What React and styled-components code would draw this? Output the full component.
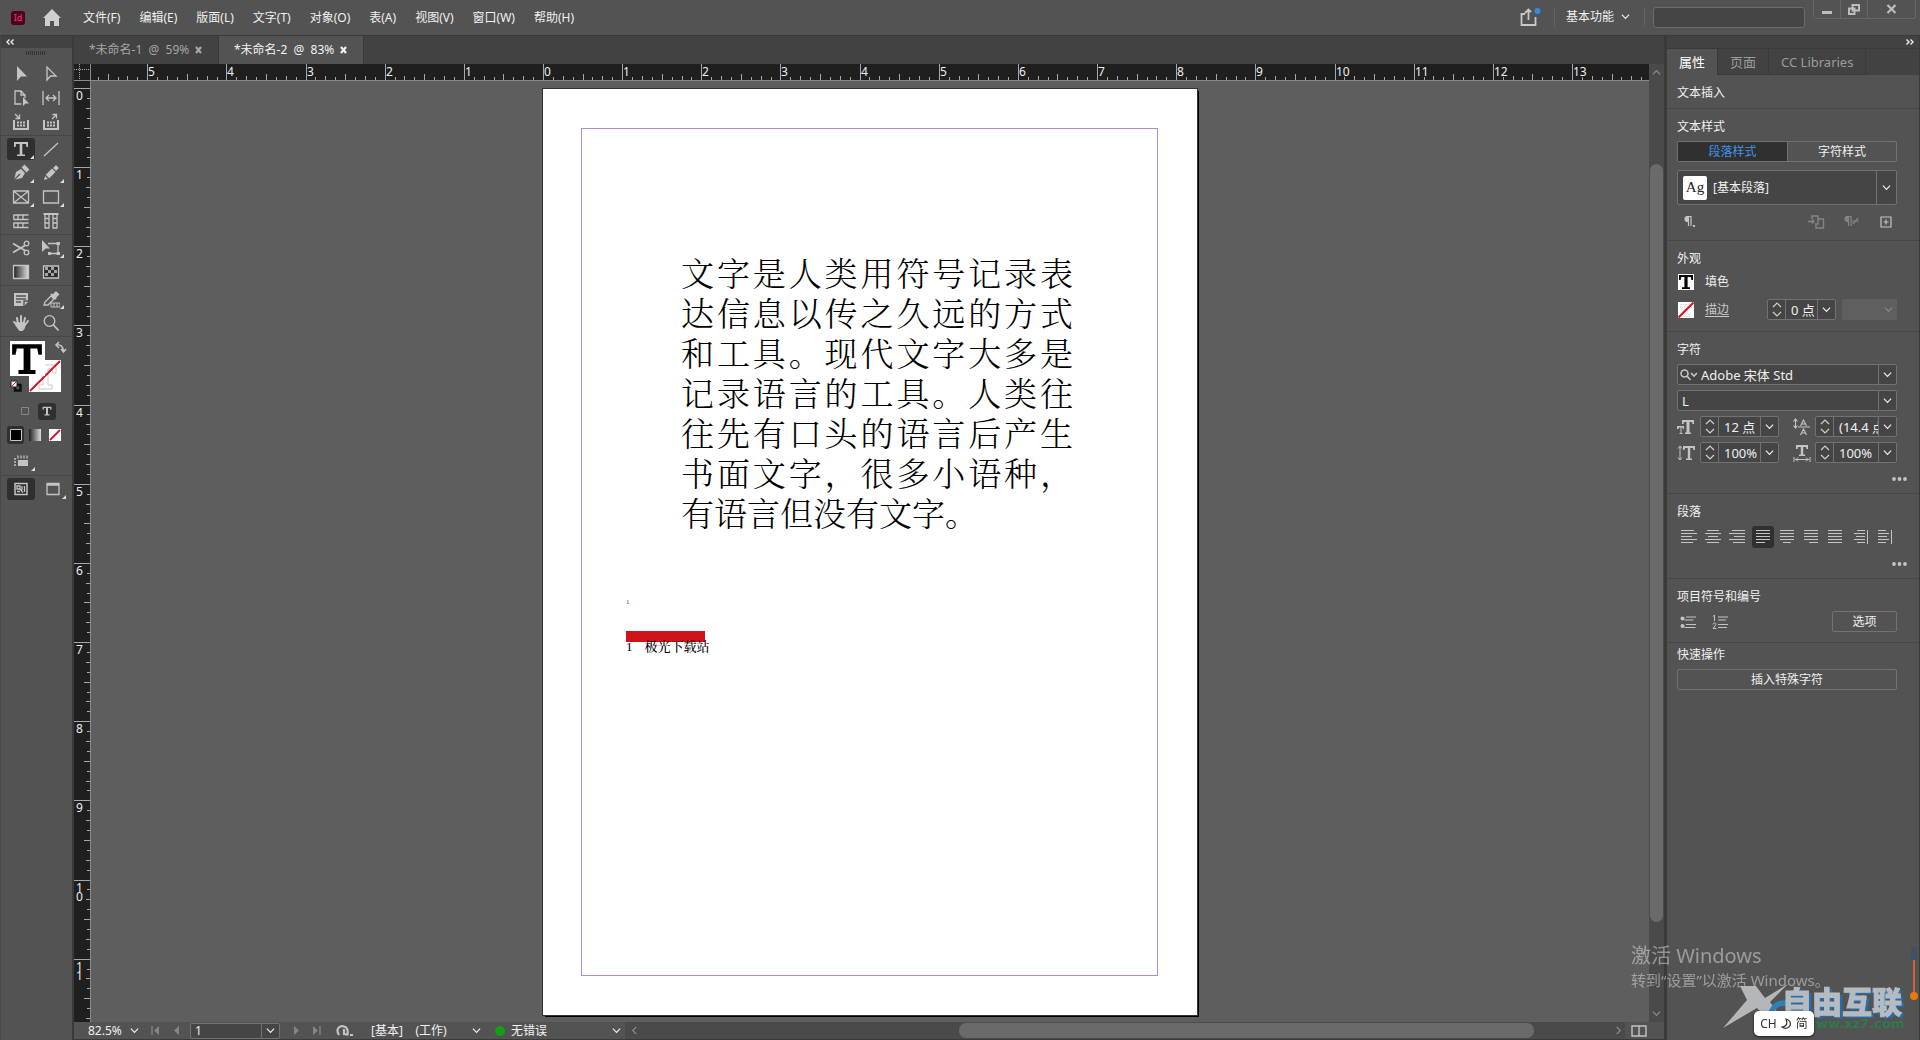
import React from "react";
import styled, { createGlobalStyle, css } from "styled-components";

const ui = `"Noto Sans", "Noto Sans CJK SC", sans-serif`;
const slab = `"DejaVu Serif", "Liberation Serif", serif`;

const c = {
  panel: "#535353",
  dark: "#424242",
  edge: "#3a3a3a",
  line: "#474747",
  canvas: "#5e5e5e",
  ruler: "#1f1f1f",
  field: "#454545",
  border: "#727272",
  text: "#f0f0f0",
  icon: "#c4c4c4",
};

const Global = createGlobalStyle`
  * { box-sizing: border-box; }
  body { margin: 0; background: ${c.panel}; overflow: hidden; }
  button, input, select { font: inherit; color: inherit; margin: 0; padding: 0; border: 0; background: none; border-radius: 0; outline: 0; }
  svg { display: block; flex: none; }
`;

const Shell = styled.div`
  height: 100vh;
  display: flex;
  flex-direction: column;
  font: 12px/16px ${ui};
  color: ${c.text};
  background: ${c.panel};
`;

/* ---------- title bar ---------- */

const TitleBar = styled.header`
  height: 35px;
  flex: none;
  display: flex;
  align-items: center;
  padding: 0 4px 0 11px;
`;

const Logo = styled.span`
  width: 14px;
  height: 14px;
  border-radius: 3px;
  background: #49021f;
  color: #ff3366;
  font-size: 9px;
  line-height: 14px;
  text-align: center;
`;

const HomeButton = styled.button`
  display: flex;
  margin-left: 18px;
`;

const IconButton = styled.button`
  display: flex;
  align-items: center;
  justify-content: center;
  width: ${(p) => p.$w || 22}px;
  height: ${(p) => p.$h || 22}px;
  color: ${(p) => (p.$dim ? "#858585" : c.icon)};
  border-radius: 3px;
  background: ${(p) => (p.$on ? "#303030" : "transparent")};
`;

const Menu = styled.nav`
  display: flex;
  gap: 19px;
  margin-left: 22px;
`;

const MenuItem = styled.button`
  white-space: nowrap;
`;

const TitleTools = styled.div`
  margin-left: auto;
  display: flex;
  align-items: center;
  align-self: stretch;
  padding-bottom: 2px;
`;

const Rule = styled.span`
  width: 1px;
  height: 20px;
  margin: 0 ${(p) => p.$r}px 0 ${(p) => p.$l}px;
  background: #636363;
`;

const Workspace = styled.button`
  display: flex;
  align-items: center;
  gap: 7px;
`;

const Search = styled.input`
  width: 152px;
  height: 21px;
  margin-top: 2px;
  background: ${c.field};
  border: 1px solid #6c6c6c;
  border-radius: 3px;
`;

const WindowButtons = styled.div`
  display: flex;
  align-self: flex-start;
  margin-left: 8px;
  height: 19px;
  border: 1px solid #666;
  border-top: 0;
  border-radius: 0 0 3px 3px;

  button {
    display: flex;
    align-items: center;
    justify-content: center;
    width: 27px;
    color: #bdbdbd;
    border-right: 1px solid #666;
  }
  button:last-child {
    width: 47px;
    border-right: 0;
  }
`;

const Body = styled.div`
  flex: 1;
  min-height: 0;
  display: flex;
`;

/* ---------- tools ---------- */

const Toolbox = styled.aside`
  width: 74px;
  flex: none;
  border-right: 2px solid ${c.edge};
  border-left: 1px solid #484848;
`;

const Collapse = styled.button`
  display: flex;
  align-items: center;
  justify-content: ${(p) => (p.$right ? "flex-end" : "flex-start")};
  width: 100%;
  height: 13px;
  padding: 0 5px;
  background: ${c.dark};
  border-top: 1px solid ${c.edge};
`;

const Grip = styled.div`
  width: 20px;
  height: 4px;
  margin: 3px auto 6px 25px;
  background: repeating-linear-gradient(90deg, #333 0 1px, transparent 1px 2px);
`;

const ToolGroup = styled.div`
  display: grid;
  grid-template-columns: 30px 30px;
  grid-auto-rows: 24px;
  padding: 1px 0 1px 5px;
  border-bottom: 1px solid ${c.line};
`;

const Tool = styled.button`
  position: relative;
  display: flex;
  align-items: center;
  justify-content: center;
  width: 28px;
  height: 22px;
  margin: 1px;
  border-radius: 3px;
  color: ${c.icon};
  background: ${(p) => (p.$on ? "#2f2f2f" : "transparent")};

  ${(p) =>
    p.$more &&
    css`
      &::after {
        content: "";
        position: absolute;
        right: 1px;
        bottom: 1px;
        border: 2px solid #ddd;
        border-top-color: transparent;
        border-left-color: transparent;
      }
    `}
`;

const Swatches = styled.div`
  position: relative;
  height: 62px;
`;

const Fill = styled.button`
  position: absolute;
  left: 9px;
  top: 4px;
  width: 35px;
  height: 35px;
  background: #fff;
  z-index: 1;
`;

const Stroke = styled.button`
  position: absolute;
  left: 28px;
  top: 23px;
  width: 32px;
  height: 32px;
  background: #fff;
`;

const Corner = styled.button`
  position: absolute;
  left: ${(p) => p.$x}px;
  top: ${(p) => p.$y}px;
  color: ${c.icon};
`;

const ModeRow = styled.div`
  display: flex;
  align-items: center;
  gap: 2px;
  height: ${(p) => p.$h || 24}px;
  padding-left: ${(p) => p.$x}px;
  ${(p) => p.$line && `border-bottom: 1px solid ${c.line};`}
`;

/* ---------- document ---------- */

const Doc = styled.main`
  flex: 1;
  min-width: 0;
  display: flex;
  flex-direction: column;
`;

const Tabs = styled.div`
  display: flex;
  flex: none;
  height: 29px;
  background: ${c.dark};
  border-top: 1px solid ${c.edge};
`;

const Tab = styled.div`
  display: flex;
  align-items: center;
  gap: 6px;
  padding: 0 14px 0 15px;
  width: 145px;
  white-space: pre;
  color: ${(p) => (p.$on ? "#f4f4f4" : "#a6a6a6")};
  background: ${(p) => (p.$on ? c.panel : "transparent")};
  border-right: 1px solid ${c.edge};
`;

const View = styled.div`
  flex: 1;
  min-height: 0;
  display: grid;
  grid-template-columns: 17px minmax(0, 1fr) 15px;
  grid-template-rows: 17px minmax(0, 1fr);
`;

const RulerCorner = styled.div`
  background: ${c.ruler};
  border: solid #8a8a8a;
  border-width: 0 1px 1px 0;
`;

const RulerBar = styled.div`
  overflow: hidden;
  background: ${c.ruler};
  border: solid #8a8a8a;
  border-width: ${(p) => (p.$v ? "0 1px 0 0" : "0 0 1px 0")};
`;

const VScroll = styled.div`
  grid-column: 3;
  grid-row: 1 / 3;
  display: flex;
  flex-direction: column;
  align-items: center;
  padding: 4px 0;
  background: #4a4a4a;
  color: #8c8c8c;
`;

const Space = styled.div`
  flex: ${(p) => p.$n};
`;

const Thumb = styled.div`
  flex: ${(p) => p.$n};
  align-self: stretch;
  margin: ${(p) => (p.$v ? "0 1px" : "1px 0")};
  border-radius: 7px;
  background: #6a6a6a;
`;

const Canvas = styled.div`
  position: relative;
  overflow: hidden;
  background: ${c.canvas};
`;

const Page = styled.article`
  position: absolute;
  left: 452px;
  top: 8px;
  width: 654px;
  height: 926px;
  padding: 39px 39px 39px 38px;
  background: #fff;
  color: #000;
  box-shadow: 0 0 0 1px #333, 2px 2px 0 0 #000;
`;

const Margins = styled.div`
  height: 848px;
  padding: 123px 84px 0 44px;
  border: 1px solid #b08cc8;
`;

const Story = styled.p`
  width: 392px;
  margin: 0 0 0 55px;
  font: 300 33px/40px "Noto Serif CJK SC", "Noto Sans CJK SC", serif;
  text-align: justify;
`;

const NoteMark = styled.sup`
  display: block;
  margin-top: 66px;
  font: 7px/8px "Liberation Serif", serif;
  color: #7a2430;
`;

const NoteRule = styled.hr`
  width: 79px;
  height: 11px;
  margin: 25px 0 0;
  border: 0;
  background: #d0121b;
`;

const Note = styled.p`
  display: flex;
  gap: 12px;
  margin: -3px 0 0;
  font: 500 13px/16px "Liberation Serif", "Noto Serif CJK SC", "Noto Sans CJK SC", serif;
`;

/* ---------- status bar ---------- */

const Status = styled.footer`
  flex: none;
  display: flex;
  align-items: center;
  height: 18px;
  padding: 0 12px 0 14px;
  border-bottom: 1px solid ${c.edge};
  color: ${c.text};
`;

const Picker = styled.div`
  display: grid;
  align-items: center;
  width: ${(p) => p.$w}px;
  margin-left: ${(p) => p.$l || 0}px;

  select {
    appearance: none;
    grid-area: 1 / 1;
    width: 100%;
  }
  svg {
    grid-area: 1 / 1;
    justify-self: end;
    pointer-events: none;
  }
`;

const Pager = styled.div`
  display: flex;
  align-items: center;
  margin-left: 5px;
`;

const PageBox = styled.div`
  display: flex;
  width: 90px;
  height: 16px;
  margin: 0 6px 0 2px;
  background: ${c.field};
  border: 1px solid ${c.border};
  border-radius: 2px;

  input {
    flex: 1;
    min-width: 0;
    padding-left: 4px;
  }
  button {
    width: 18px;
    display: flex;
    align-items: center;
    justify-content: center;
    border-left: 1px solid ${c.border};
  }
`;

const Lamp = styled.span`
  width: 10px;
  height: 10px;
  margin: 0 6px 0 14px;
  border-radius: 5px;
  background: #12a012;
`;

const HScroll = styled.div`
  flex: 1;
  align-self: stretch;
  display: flex;
  align-items: center;
  margin-left: 4px;
  padding: 0 2px 0 5px;
  background: #4a4a4a;
  color: #8c8c8c;
`;

/* ---------- properties ---------- */

const Dock = styled.aside`
  width: 256px;
  flex: none;
  border-left: 3px solid ${c.edge};
  border-right: 1px solid ${c.edge};
`;

const DockTabs = styled.div`
  display: flex;
  height: 27px;
  background: ${c.dark};
  border-top: 1px solid ${c.edge};
`;

const DockTab = styled.button`
  padding: 0 12px;
  font-size: 13px;
  color: ${(p) => (p.$on ? "#fff" : "#9c9c9c")};
  background: ${(p) => (p.$on ? c.panel : "transparent")};
  border-right: 1px solid ${c.edge};
  border-bottom: 1px solid ${(p) => (p.$on ? c.panel : c.edge)};
`;

const Section = styled.section`
  padding: ${(p) => p.$t || 10}px 22px ${(p) => p.$b || 6}px 10px;
  border-bottom: ${(p) => (p.$last ? 0 : 1)}px solid ${c.line};
`;

const Title = styled.h2`
  margin: 0;
  font: inherit;
`;

const Row = styled.div`
  display: flex;
  align-items: center;
  height: ${(p) => p.$h || 21}px;
  margin-top: ${(p) => p.$t || 5}px;
  gap: ${(p) => p.$g || 0}px;
`;

const Segments = styled.div`
  display: grid;
  grid-template-columns: 1fr 1fr;
  height: 21px;
  margin-top: 6px;
  border: 1px solid ${c.border};
  border-radius: 2px;
`;

const Segment = styled.button`
  color: ${(p) => (p.$on ? "#3f93e8" : c.text)};
  background: ${(p) => (p.$on ? "#303030" : "transparent")};
  border-left: ${(p) => (p.$on ? 0 : 1)}px solid ${c.border};
`;

const Field = styled.div`
  display: flex;
  align-items: stretch;
  width: ${(p) => (p.$w ? p.$w + "px" : "100%")};
  height: ${(p) => p.$h || 21}px;
  margin-top: ${(p) => p.$t || 0}px;
  background: ${c.field};
  border: 1px solid ${c.border};
  border-radius: 2px;
  color: ${c.text};

  input {
    flex: 1;
    width: 0;
    min-width: 0;
    padding-left: ${(p) => p.$pad || 4}px;
    font-size: 13px;
  }
`;

const DropButton = styled.button`
  display: flex;
  align-items: center;
  justify-content: center;
  width: ${(p) => p.$w || 18}px;
  border-left: 1px solid ${c.border};
`;

const Spin = styled.div`
  display: flex;
  flex-direction: column;
  justify-content: space-evenly;
  align-items: center;
  width: 18px;
  border-right: 1px solid ${c.border};
  button {
    display: flex;
  }
`;

const Sample = styled.span`
  align-self: center;
  width: 24px;
  height: 24px;
  margin-left: 5px;
  border-radius: 2px;
  background: #fff;
  color: #222;
  font: 15px/22px "Liberation Serif", serif;
  text-align: center;
`;

const StylePicker = styled.div`
  flex: 1;
  display: flex;
  margin-left: 6px;
  select {
    appearance: none;
    width: 100%;
  }
`;

const StyleTools = styled.div`
  display: flex;
  gap: 13px;
  margin-left: auto;
`;

const FillLabel = styled.label`
  margin-left: 11px;
`;

const SearchMark = styled.span`
  display: flex;
  align-items: center;
  padding-left: 2px;
  color: ${c.icon};
`;

const AlignRow = styled.div`
  display: flex;
  gap: 4px;
  height: 22px;
  margin: 6px 0 0 1px;
`;

const AlignGroup = styled.div`
  display: flex;
  gap: 2px;
`;

const Disabled = styled.button`
  display: flex;
  align-items: center;
  justify-content: flex-end;
  width: 55px;
  height: 21px;
  margin-left: 6px;
  padding-right: 4px;
  color: #8a8a8a;
  background: #5f5f5f;
`;

const CharGrid = styled.div`
  display: grid;
  grid-template-columns: 23px 79px 36px 1fr;
  row-gap: 5px;
  align-items: center;
  margin-top: 5px;
  color: ${c.icon};

  > :nth-child(4n + 3) {
    margin-left: 14px;
  }
`;

const SwatchButton = styled.button`
  width: 16px;
  height: 16px;
  background: #fff;
  margin-left: 1px;
`;

const Link = styled.a`
  color: #c8c8c8;
  margin-left: 11px;
  width: 62px;
  text-underline-offset: 2px;
`;

const Push = styled.button`
  width: ${(p) => (p.$w ? p.$w + "px" : "100%")};
  height: 21px;
  margin-top: ${(p) => p.$t || 0}px;
  margin-left: ${(p) => (p.$w ? "auto" : 0)};
  border: 1px solid ${c.border};
  border-radius: 2px;
`;

const MoreButton = styled.button`
  display: flex;
  align-items: center;
  height: 16px;
  margin: 8px -10px 0 auto;
  color: ${c.icon};
`;

/* ---------- overlays ---------- */

const Activate = styled.div`
  position: fixed;
  right: 94px;
  bottom: 49px;
  width: 195px;
  color: rgba(255, 255, 255, 0.42);
  font-size: 15px;
  line-height: 22px;
  white-space: nowrap;
  pointer-events: none;

  strong {
    display: block;
    font-weight: 400;
    font-size: 20px;
    line-height: 26px;
  }
`;

const Brand = styled.div`
  position: fixed;
  right: 10px;
  bottom: 4px;
  width: 188px;
  height: 54px;
  pointer-events: none;
`;

const Ime = styled.div`
  position: fixed;
  right: 106px;
  bottom: 4px;
  display: flex;
  align-items: center;
  justify-content: center;
  gap: 4px;
  width: 60px;
  height: 25px;
  border-radius: 5px;
  background: #fff;
  color: #333;
  box-shadow: 0 1px 3px rgba(0, 0, 0, 0.6);
`;

const Gauge = styled.div`
  position: fixed;
  right: 2px;
  bottom: 39px;
  pointer-events: none;
`;

/* ---------- drawings ---------- */

const Svg = ({ s = 18, w, h, sw = 1.3, children }) => (
  <svg width={w || s} height={h || s} viewBox={`0 0 ${w || s} ${h || s}`} fill="none" stroke="currentColor" strokeWidth={sw} aria-hidden="true">
    {children}
  </svg>
);

const Chevron = ({ up, left, right }) => (
  <svg width="9" height="9" viewBox="0 0 10 10" fill="none" stroke="currentColor" strokeWidth="1.3" aria-hidden="true">
    <path d={up ? "M1 7l4-4 4 4" : left ? "M7 1L3 5l4 4" : right ? "M3 1l4 4-4 4" : "M1 3l4 4 4-4"} />
  </svg>
);

const Tick = ({ up }) => (
  <svg width="10" height="6" viewBox="0 0 10 6" fill="none" stroke="#d0d0d0" strokeWidth="1.2" aria-hidden="true">
    <path d={up ? "M1 5l4-4 4 4" : "M1 1l4 4 4-4"} />
  </svg>
);

const Cross = () => (
  <svg width="7" height="8" viewBox="0 0 7 8" stroke="currentColor" strokeWidth="2.2" aria-hidden="true">
    <path d="M1 1l5 6M6 1l-5 6" />
  </svg>
);

/* slab-serif T used by the type tool and the text swatches, on a 16 x 16 grid */
const SLAB_T = "M1 1h14v5h-1.600L12.800 3H9.600v10.200H12V15H4v-1.800h2.400V3H3.200L2.600 6H1z";

const TypeMark = ({ s, color = "currentColor" }) => (
  <svg width={s} height={s} viewBox="0 0 16 16" aria-hidden="true">
    <path d={SLAB_T} fill={color} />
  </svg>
);

const NoneT = ({ s }) => (
  <svg width={s} height={s} viewBox="0 0 32 32" aria-hidden="true">
    <path d="M5 5h22v8h-3l-1-4h-4v16h4v4H10v-4h4V9h-5l-1 4H5z" fill="none" stroke="#c9c9c9" />
    <path d="M1 31L31 1" stroke="#d2142b" strokeWidth={s > 20 ? 2 : 4} />
  </svg>
);

const drawings = {
  select: <path d="M5 1v15l4-4.500h6z" fill="currentColor" stroke="none" />,
  direct: <path d="M5 2v13l3.500-4h5.500z" />,
  page: (<><path d="M9.500 15H3V2h6l4 4v3M9 2v4h4" /><path d="M11 8v9l2.500-2.500H17z" fill="currentColor" stroke="none" /></>),
  gap: <path d="M1 2v14M17 2v14M4 9h10M7 6L4 9l3 3M11 6l3 3-3 3" />,
  collect: (<><path d="M2 7v9h14V7" strokeWidth="2" /><path d="M5 9.500h8M5 12.500h8" strokeDasharray="2 1" strokeWidth="2" /><path d="M3 1l4 4M7.500 1.500v4h-4" /></>),
  place: (<><path d="M2 7v9h14V7" strokeWidth="2" /><path d="M5 9.500h8M5 12.500h8" strokeDasharray="2 1" strokeWidth="2" /><path d="M10 6l4-4M10.500 1.500h4v4" /></>),
  type: <path d="M2 2h14v5h-1.500L14 4h-3.700v10.500H13V16H5v-1.500h2.700V4H4L3.500 7H2z" fill="currentColor" stroke="none" />,
  line: <path d="M2 16L16 3" />,
  pen: (<><path d="M2 16l2-8 5-3 4 4-3 5z" fill="currentColor" stroke="none" /><path d="M11 2l5 5" strokeWidth="4" /><path d="M2 16l6-6" stroke="#535353" /></>),
  pencil: (<><path d="M2 16l1.500-5L10 4.500 13.500 8 7 14.500z" fill="currentColor" stroke="none" /><path d="M12.500 2.500l3 3" strokeWidth="4" /><path d="M3 11l4 4" stroke="#535353" /></>),
  frame: <path d="M1.500 3h15v12h-15zM1.500 3l15 12M16.500 3l-15 12" />,
  rect: <path d="M1.500 3h15v12h-15z" />,
  hgrid: (<><path d="M1.500 3h15M1.500 7.500h15M1.500 11h15M1.500 15.500h15" strokeWidth="1.500" /><path d="M1.800 3v4.500M6 3v4.500M11 3v4.500M1.800 11v4.500M6 11v4.500M11 11v4.500" /></>),
  vgrid: (<><path d="M1.500 2h15" strokeWidth="2" /><path d="M3 2v14.500M7 2v14.500M11 2v14.500M15 2v14.500" /><path d="M3 6.500h4M3 11h4M3 16h4M11 6.500h4M11 11h4M11 16h4" /></>),
  scissors: (<><path d="M1 4.500l12 7M1 13.500l12-7" strokeWidth="1.800" /><circle cx="14.500" cy="4.500" r="2.300" /><circle cx="14.500" cy="13.500" r="2.300" /></>),
  transform: (<><path d="M6 4.500h10v10H7" /><path d="M0 1v12l3.500-3.500H8z" fill="currentColor" stroke="none" /><path d="M14.500 3H18v3h-3.500zM14.500 13H18v3h-3.500zM6 13h3v3H6z" fill="currentColor" stroke="none" /></>),
  gradient: (<><defs><linearGradient id="ramp"><stop offset="0" stopColor="#222" /><stop offset="1" stopColor="#ddd" /></linearGradient></defs><path d="M1.500 2.500h15v13h-15z" fill="url(#ramp)" /></>),
  feather: (<><path d="M1.500 3h15v12h-15z" fill="#2c2c2c" /><path d="M3 5.500h12M6 8.500h12M3 11.500h12" strokeDasharray="3 3" strokeWidth="3" stroke="#a5a5a5" /></>),
  note: (<><path d="M2 3h14v9l-4 4H2z" fill="currentColor" stroke="none" /><path d="M4 6h10M4 9h10M4 12h5" stroke="#535353" /><path d="M16 11h-4v5" stroke="#535353" /></>),
  dropper: (<><path d="M2 15l1-3 6-6 3 3-6 6z" /><path d="M10 6l4-4 2.500 2.500-4 4z" fill="currentColor" /><path d="M9 4l5 5" strokeWidth="2" /><path d="M9 13h9v4H9zM12 13v4M15 13v4" strokeWidth="1" /></>),
  hand: (<><path d="M5 10L2 8M6 10L5 4M9 9V2M11.500 10l1.500-6M13 11l3-4" strokeWidth="2" strokeLinecap="round" /><path d="M4.500 8.500l8-.5 1.500 2-1.500 5-2 2h-3L4 12.500 1.500 8z" fill="currentColor" stroke="none" /></>),
  zoom: (<><circle cx="7.500" cy="7" r="5.300" /><path d="M11.500 11l5 5.500" strokeWidth="1.800" /></>),
  normal: (<><path d="M3 3.500h12v11H3z" strokeWidth="1.500" /><path d="M5 6h3v3H5zM10 6v4M12.500 6v6M5 11.500h3M8 9l3 3.500" /></>),
  screen: (<><path d="M3 3.500h12v11H3z" /><path d="M3 4.500h12" strokeWidth="2.500" /></>),
  options: (<><path d="M5 8h10v6H5z" fill="currentColor" stroke="none" /><path d="M5 3.500v3M8 3.500v3M11 3.500v3M14 3.500v3" /><path d="M1 7h2M1 10h2M1 13h2" /></>),
};

const Draw = ({ name }) => <Svg>{drawings[name]}</Svg>;

const STEP = 79.15;
const ticks = (from, to) => {
  const out = [];
  for (let i = from * 8; i <= to * 8; i++) out.push(i);
  return out;
};
const reach = (i) => (i % 8 === 0 ? 16 : i % 4 === 0 ? 6 : i % 2 === 0 ? 4 : 3);

const HRuler = () => (
  <svg width="100%" height="16" aria-hidden="true">
    {ticks(-6, 20).map((i) => {
      const x = Math.round(453 + (i * STEP) / 8) - 0.5;
      return <path key={i} d={`M${x} 16v-${reach(i)}`} stroke="#a8a8a8" />;
    })}
    {Array.from({ length: 19 }, (_, k) => k - 5).map((n) => (
      <text key={n} x={Math.round(453 + n * STEP)} y="12" fontSize="12" fontFamily={ui} fill="#eee">{Math.abs(n)}</text>
    ))}
  </svg>
);

const VRuler = () => (
  <svg width="16" height="100%" aria-hidden="true">
    {ticks(0, 16).map((i) => {
      const y = Math.round(8 + (i * STEP) / 8) - 0.5;
      return <path key={i} d={`M16 ${y}h-${reach(i)}`} stroke="#a8a8a8" />;
    })}
    {Array.from({ length: 12 }, (_, n) => n).map((n) =>
      String(n).split("").map((d, k) => (
        <text key={n + "-" + k} x="2" y={Math.round(8 + n * STEP) + 11 + k * 9} fontSize="12" fontFamily={ui} fill="#eee">{d}</text>
      ))
    )}
  </svg>
);

const alignLines = {
  left: [[1, 14], [1, 17], [1, 12], [1, 17], [1, 13]],
  center: [[3, 15], [1, 17], [4, 14], [1, 17], [3, 15]],
  right: [[4, 17], [1, 17], [6, 17], [1, 17], [5, 17]],
  justLeft: [[2, 16], [2, 16], [2, 16], [2, 16], [2, 11]],
  justCenter: [[2, 16], [2, 16], [2, 16], [2, 16], [5, 13]],
  justRight: [[2, 16], [2, 16], [2, 16], [2, 16], [7, 16]],
  justAll: [[2, 16], [2, 16], [2, 16], [2, 16], [2, 16]],
  toSpine: [[5, 13], [2, 13], [4, 13], [2, 13], [5, 13]],
  fromSpine: [[2, 10], [2, 13], [2, 11], [2, 13], [2, 10]],
};

const AlignIcon = ({ kind }) => (
  <Svg sw={1}>
    {alignLines[kind].map(([a, b], i) => <path key={i} d={`M${a} ${2.5 + i * 3}H${b}`} />)}
    {/Spine/.test(kind) && <path d="M15.500 2v14" />}
  </Svg>
);

const Align = ({ kind, label, on }) => (
  <IconButton $on={on} aria-label={label}><AlignIcon kind={kind} /></IconButton>
);

const NumberField = ({ label, value, w }) => (
  <Field $w={w} $pad={5}>
    <Spin>
      <button aria-label={label + " +"}><Tick up /></button>
      <button aria-label={label + " -"}><Tick /></button>
    </Spin>
    <input aria-label={label} defaultValue={value} />
    <DropButton aria-label={label + " ▾"}><Chevron /></DropButton>
  </Field>
);

const More = () => (
  <MoreButton aria-label="更多选项">
    <svg width="15" height="4" viewBox="0 0 15 4" fill="currentColor" aria-hidden="true"><circle cx="2" cy="2" r="1.900" /><circle cx="7.500" cy="2" r="1.900" /><circle cx="13" cy="2" r="1.900" /></svg>
  </MoreButton>
);

const groups = [
  [["select", "选择"], ["direct", "直接选择"], ["page", "页面"], ["gap", "间隙"], ["collect", "内容收集器"], ["place", "内容置入器"]],
  [["type", "文字", 1, 1], ["line", "直线"], ["pen", "钢笔", 1], ["pencil", "铅笔", 1], ["frame", "矩形框架", 1], ["rect", "矩形", 1], ["hgrid", "水平网格"], ["vgrid", "垂直网格"]],
  [["scissors", "剪刀"], ["transform", "自由变换", 1], ["gradient", "渐变色板"], ["feather", "渐变羽化"]],
  [["note", "附注"], ["dropper", "吸管", 1], ["hand", "抓手"], ["zoom", "缩放显示"]],
];

const menus = ["文件(F)", "编辑(E)", "版面(L)", "文字(T)", "对象(O)", "表(A)", "视图(V)", "窗口(W)", "帮助(H)"];

function Header() {
  return (
    <TitleBar>
      <Logo>Id</Logo>
      <HomeButton aria-label="主页">
        <svg width="18" height="17" viewBox="0 0 18 17" fill="#d0d0d0" aria-hidden="true"><path d="M9 0l9 9h-2v8h-5v-5H7v5H2V9H0z" /></svg>
      </HomeButton>
      <Menu>{menus.map((m) => <MenuItem key={m}>{m}</MenuItem>)}</Menu>
      <TitleTools>
        <IconButton aria-label="共享">
          <svg width="21" height="18" viewBox="0 0 21 18" fill="none" stroke="#c8c8c8" strokeWidth="1.800" aria-hidden="true"><path d="M5 6H1.500v11h14V9M8.500 12V2M5 5l3.500-3.500L11 4" /><circle cx="17.500" cy="3" r="3" fill="#2d8ceb" stroke="none" /></svg>
        </IconButton>
        <Rule $l={12} $r={11} />
        <Workspace>基本功能 <Chevron /></Workspace>
        <Rule $l={14} $r={8} />
        <Search aria-label="搜索" />
        <WindowButtons>
          <button aria-label="最小化"><svg width="10" height="12" viewBox="0 0 10 12" aria-hidden="true"><path d="M0 8h10v3H0z" fill="#bdbdbd" /></svg></button>
          <button aria-label="还原"><Svg w={12} h={11} sw={2}><path d="M4.500 1h6.500v5.500H4.500zM1 4.500h5.500V10H1z" /></Svg></button>
          <button aria-label="关闭"><Svg w={11} h={10} sw={2.2}><path d="M1.500 1l8 8M9.500 1l-8 8" /></Svg></button>
        </WindowButtons>
      </TitleTools>
    </TitleBar>
  );
}

function Tools() {
  return (
    <Toolbox>
      <Collapse aria-label="折叠工具"><Svg w={8} h={6} sw={1.4}><path d="M3.500 0.500L1 3l2.500 2.500M7.500 0.500L5 3l2.500 2.500" /></Svg></Collapse>
      <Grip />
      {groups.map((g, i) => (
        <ToolGroup key={i}>
          {g.map(([name, label, more, on]) => (
            <Tool key={name} $more={more} $on={on} aria-label={label}><Draw name={name} /></Tool>
          ))}
        </ToolGroup>
      ))}
      <Swatches>
        <Fill aria-label="填色"><TypeMark s={34} color="#000" /></Fill>
        <Stroke aria-label="描边"><NoneT s={32} /></Stroke>
        <Corner $x={53} $y={4} aria-label="互换填色和描边"><Svg w={13} h={13} sw={1.5}><path d="M2 4c5-1 7 2 7.500 6M5 1L2 4l3 3M7 8l2.500 3L12 8" /></Svg></Corner>
        <Corner $x={9} $y={43} aria-label="默认填色和描边"><Svg w={12} h={12} sw={1.5}><path d="M5 5h5.500v5.500H5z" stroke="#111" strokeWidth="2.500" /><path d="M1 1h6v6H1z" fill="#eee" stroke="#222" strokeWidth="1" /><path d="M1.500 6.500l5-5" stroke="#d2142b" strokeWidth="1" /></Svg></Corner>
      </Swatches>
      <ModeRow $x={12}>
        <IconButton $w={23} $h={17} $dim aria-label="格式针对容器"><Svg s={8} sw={1}><path d="M.5.5h7v7h-7z" /></Svg></IconButton>
        <IconButton $w={18} $h={17} $on aria-label="格式针对文本"><TypeMark s={10} /></IconButton>
      </ModeRow>
      <ModeRow $x={6}>
        <IconButton $w={17} $h={18} $on aria-label="应用颜色"><Svg s={12} sw={1}><path d="M.5.5h11v11H.5z" fill="#000" /></Svg></IconButton>
        <IconButton $w={18} $h={18} aria-label="应用渐变"><Svg s={12} sw={1}><path d="M0 0h12v12H0z" fill="url(#ramp)" stroke="none" /></Svg></IconButton>
        <IconButton $w={18} $h={18} aria-label="应用无"><Svg s={12}><path d="M0 0h12v12H0z" fill="#fff" stroke="none" /><path d="M1 11L11 1" stroke="#d2142b" strokeWidth="1.800" /></Svg></IconButton>
      </ModeRow>
      <ModeRow $x={6} $h={29} $line><Tool $more aria-label="视图选项"><Draw name="options" /></Tool></ModeRow>
      <ModeRow $x={5} $h={26}>
        <Tool $on aria-label="正常"><Draw name="normal" /></Tool>
        <Tool $more aria-label="屏幕模式"><Draw name="screen" /></Tool>
      </ModeRow>
    </Toolbox>
  );
}

function Document() {
  return (
    <Doc>
      <Tabs>
        <Tab>*未命名-1  @  59%<button aria-label="关闭 未命名-1"><Cross /></button></Tab>
        <Tab $on>*未命名-2  @  83%<button aria-label="关闭 未命名-2"><Cross /></button></Tab>
      </Tabs>
      <View>
        <RulerCorner><svg width="16" height="16" aria-hidden="true"><path d="M5.500 0v16M0 5.500h16" stroke="#aaa" strokeDasharray="1 1" /></svg></RulerCorner>
        <RulerBar><HRuler /></RulerBar>
        <VScroll>
          <Chevron up />
          <Space $n={87} /><Thumb $v $n={756} /><Space $n={87} />
          <Chevron />
        </VScroll>
        <RulerBar $v><VRuler /></RulerBar>
        <Canvas>
          <Page>
            <Margins>
              <Story>文字是人类用符号记录表达信息以传之久远的方式和工具。现代文字大多是记录语言的工具。人类往往先有口头的语言后产生书面文字，很多小语种，有语言但没有文字。</Story>
              <NoteMark>1</NoteMark>
              <NoteRule />
              <Note><span>1</span><span>极光下载站</span></Note>
            </Margins>
          </Page>
        </Canvas>
      </View>
      <Status>
        <Picker $w={51}><select aria-label="缩放级别"><option>82.5%</option></select><Chevron /></Picker>
        <Pager>
          <IconButton $dim $w={22} $h={16} aria-label="第一页"><Svg s={9}><path d="M1 0v9" /><path d="M8 0v9L3 4.500z" fill="currentColor" stroke="none" /></Svg></IconButton>
          <IconButton $dim $w={22} $h={16} aria-label="上一页"><Svg w={6} h={9}><path d="M5 0v9L0 4.500z" fill="currentColor" stroke="none" /></Svg></IconButton>
        </Pager>
        <PageBox><input aria-label="页码" defaultValue="1" /><button aria-label="选择页面"><Chevron /></button></PageBox>
        <IconButton $dim $w={20} $h={16} aria-label="下一页"><Svg w={6} h={9}><path d="M1 0v9l5-4.500z" fill="currentColor" stroke="none" /></Svg></IconButton>
        <IconButton $dim $w={20} $h={16} aria-label="最后一页"><Svg s={9}><path d="M8 0v9" /><path d="M1 0v9l5-4.500z" fill="currentColor" stroke="none" /></Svg></IconButton>
        <IconButton $w={36} $h={16} aria-label="在资源管理器中显示"><Svg w={17} h={12}><path d="M3 10C-1 4 4 0 8 1.500c4 1 4 5 3.500 8L8 9V4" strokeWidth="2.200" /><path d="M14 9h3v2h-3z" fill="currentColor" stroke="none" /></Svg></IconButton>
        <Picker $w={110} $l={9}><select aria-label="印前检查配置文件"><option>{"[基本]\u00a0\u00a0\u00a0\u00a0(工作)"}</option></select><Chevron /></Picker>
        <Lamp />
        <Picker $w={110}><select aria-label="印前检查"><option>无错误</option></select><Chevron /></Picker>
        <HScroll>
          <Chevron left />
          <Space $n={320} /><Thumb $n={575} /><Space $n={80} />
          <Chevron right />
        </HScroll>
        <IconButton $w={27} $h={17} aria-label="拆分版面视图"><Svg w={16} h={12} sw={1.4}><path d="M1 1h14v10H1zM8 1v10" /></Svg></IconButton>
      </Status>
    </Doc>
  );
}

function Properties() {
  return (
    <Dock>
      <Collapse $right aria-label="折叠面板"><Svg w={8} h={6} sw={1.4}><path d="M0.500 0.500L3 3 0.500 5.500M4.500 0.500L7 3 4.500 5.500" /></Svg></Collapse>
      <DockTabs>
        <DockTab $on>属性</DockTab>
        <DockTab>页面</DockTab>
        <DockTab>CC Libraries</DockTab>
      </DockTabs>
      <Section $b={7}><Title>文本插入</Title></Section>
      <Section $b={9}>
        <Title>文本样式</Title>
        <Segments><Segment $on>段落样式</Segment><Segment>字符样式</Segment></Segments>
        <Field $h={35} $t={8}>
          <Sample>Ag</Sample>
          <StylePicker>
            <select aria-label="段落样式"><option>[基本段落]</option></select>
          </StylePicker>
          <DropButton $w={20} aria-label="打开段落样式"><Chevron /></DropButton>
        </Field>
        <Row $h={18} $t={8} $g={13}>
          <IconButton $w={24} $h={18} aria-label="段落样式选项"><Svg w={14} h={14} sw={1.2}><path d="M4.500 1.500H9v9.500M6.500 1.500V11" /><path d="M5.500 1.500a2.500 2.500 0 0 0 0 5z" fill="currentColor" /><path d="M11 10h2v2h-2z" fill="currentColor" stroke="none" /></Svg></IconButton>
          <StyleTools>
            <IconButton $dim aria-label="重新定义样式"><Svg w={17} h={14} sw={1.4}><path d="M4 4V1h6v8H7M10 4h5.500v9H8v-3M0 6.500h6M4 4.500l2 2-2 2" /></Svg></IconButton>
            <IconButton $dim aria-label="清除优先选项"><Svg w={18} h={14} sw={1.2}><path d="M4.500 1.500H9v9.500M6.500 1.500V11M10 6h7M11 9l5-6" /><path d="M5.500 1.500a2.500 2.500 0 0 0 0 5z" fill="currentColor" /></Svg></IconButton>
            <IconButton aria-label="创建新样式"><Svg w={12} h={12} sw={1.2}><path d="M1 1h10v10H1zM6 3.500v5M3.500 6h5" /></Svg></IconButton>
          </StyleTools>
        </Row>
      </Section>
      <Section $b={11}>
        <Title>外观</Title>
        <Row $h={18} $t={6}>
          <SwatchButton id="fill"><TypeMark s={16} color="#000" /></SwatchButton>
          <FillLabel htmlFor="fill">填色</FillLabel>
        </Row>
        <Row $t={8}>
          <SwatchButton aria-label="描边颜色"><NoneT s={16} /></SwatchButton>
          <Link href="#stroke">描边</Link>
          <NumberField w={69} label="描边粗细" value="0 点" />
          <Disabled disabled aria-label="描边类型"><Chevron /></Disabled>
        </Row>
      </Section>
      <Section>
        <Title>字符</Title>
        <Field $t={6} $pad={3}>
          <SearchMark><Svg w={18} h={12} sw={1.6}><circle cx="4.500" cy="4.500" r="3.500" /><path d="M7 7l3.500 4M11 4l3 3 3-3" /></Svg></SearchMark>
          <input aria-label="字体" defaultValue="Adobe 宋体 Std" />
          <DropButton aria-label="选择字体"><Chevron /></DropButton>
        </Field>
        <Field $t={5}>
          <input aria-label="字体样式" defaultValue="L" />
          <DropButton aria-label="选择字体样式"><Chevron /></DropButton>
        </Field>
        <CharGrid>
          <svg width="18" height="18" aria-hidden="true" fill="currentColor"><path d="M5 2h12v4h-1.500L15 4h-2.500v10.500H14V16H8v-1.500h1.500V4H7l-.5 2H5z" /><path d="M0 8h7v3H6l-.5-1.500h-1V15h1v1h-3v-1h1V9.500H2L1.500 11H0z" /></svg>
          <NumberField label="字体大小" value="12 点" />
          <Svg sw={1.1}><path d="M2.500 1v9M.5 3.500l2-2.500 2 2.500M.5 7.500l2 2.500 2-2.500M5 9h12M7.500 8l3-6 3 6M8.500 6h4M7.500 17l3-6 3 6M8.500 15h4" /></Svg>
          <NumberField label="行距" value="(14.4 点)" />
          <svg width="18" height="18" aria-hidden="true" fill="currentColor"><path d="M3 2v14M1 4.500L3 2l2 2.500M1 13.500L3 16l2-2.500" fill="none" stroke="currentColor" /><path d="M6 2h12v4h-1.500L16 4h-2.800v10.500H15V16H9v-1.500h1.800V4H8l-.5 2H6z" /></svg>
          <NumberField label="垂直缩放" value="100%" />
          <svg width="18" height="18" aria-hidden="true" fill="currentColor"><path d="M3 1h12v4h-1.500L13 3h-2.800v7.500H12V12H6v-1.500h1.800V3H5l-.5 2H3z" /><path d="M1 13v5M17 13v5M2 15.500h14M5 13.500l-2 2 2 2M13 13.500l2 2-2 2" fill="none" stroke="currentColor" /></svg>
          <NumberField label="水平缩放" value="100%" />
        </CharGrid>
        <More />
      </Section>
      <Section>
        <Title>段落</Title>
        <AlignRow>
          <AlignGroup>
            <Align kind="left" label="左对齐" /><Align kind="center" label="居中对齐" /><Align kind="right" label="右对齐" />
          </AlignGroup>
          <AlignGroup>
            <Align on kind="justLeft" label="双齐末行齐左" /><Align kind="justCenter" label="双齐末行居中" /><Align kind="justRight" label="双齐末行齐右" /><Align kind="justAll" label="全部强制双齐" />
          </AlignGroup>
          <AlignGroup>
            <Align kind="toSpine" label="朝向书脊对齐" /><Align kind="fromSpine" label="背向书脊对齐" />
          </AlignGroup>
        </AlignRow>
        <More />
      </Section>
      <Section $b={10}>
        <Title>项目符号和编号</Title>
        <Row $t={6} $g={10}>
          <IconButton aria-label="项目符号列表"><Svg s={16} sw={1.1}><circle cx="2.500" cy="4.500" r="2" fill="currentColor" stroke="none" /><circle cx="2.500" cy="12" r="2" fill="currentColor" stroke="none" /><path d="M6 3h10M4.500 6h9M6 10.500h10M4.500 13.500h11" /></Svg></IconButton>
          <IconButton aria-label="编号列表"><Svg s={16} sw={1}><path d="M6 3h10M6 6h8M6 10.500h10M6 13.500h9" /><path d="M1 2.500L2.500 1v6M1 10.500c0-2 3-2 3 0L1 14.500h3.500" /></Svg></IconButton>
          <Push $w={65}>选项</Push>
        </Row>
      </Section>
      <Section $t={4} $last>
        <Title>快速操作</Title>
        <Push $t={6}>插入特殊字符</Push>
      </Section>
    </Dock>
  );
}

export default function App() {
  return (
    <Shell>
      <Global />
      <Header />
      <Body>
        <Tools />
        <Document />
        <Properties />
      </Body>
      <Activate><strong>激活 Windows</strong>转到“设置”以激活 Windows。</Activate>
      <Brand>
        <svg width="188" height="54" viewBox="0 0 188 54" aria-hidden="true">
          <path d="M18 4h16l9 12L66 2 48 20l12 16H44l-9-10L1 46l24-28z" fill="#b4b6b8" />
          <path d="M46 33c2-12 12-18 24-13l-4 5c-8-3-13 1-15 8z" fill="#2f7fb8" />
          <path d="M72 22c12 12 4 24-8 27 10-8 12-16 4-23z" fill="#55a552" />
          <g fontFamily={`"Noto Sans CJK SC", sans-serif`} fontWeight="900" fontSize="30">
            <text x="63" y="33" fill="#2a6ca6" aria-hidden="true">自由互联</text>
            <text x="60" y="31" fill="#b4bcc2" stroke="#b4bcc2" strokeWidth="1">自由互联</text>
          </g>
          <text x="82" y="46" fontFamily={`"DejaVu Sans", sans-serif`} fontWeight="700" fontSize="13" fill="#2f7a4d">www.xz7.com</text>
        </svg>
      </Brand>
      <Ime>
        <span>CH</span>
        <Svg s={11} sw={1.2}><path d="M5 1c4 1 6 5 3 8-2 1.500-5 1.500-7 0 4 0 6-3 4-8z" /></Svg>
        <span>简</span>
      </Ime>
      <Gauge>
        <svg width="8" height="54" viewBox="0 0 8 54" aria-hidden="true">
          <path d="M1 0h6v13H1z" fill="#3f5163" />
          <path d="M4 13v33" stroke="#c8633c" strokeWidth="2" />
          <circle cx="4" cy="49" r="4" fill="#e8780a" />
        </svg>
      </Gauge>
    </Shell>
  );
}
